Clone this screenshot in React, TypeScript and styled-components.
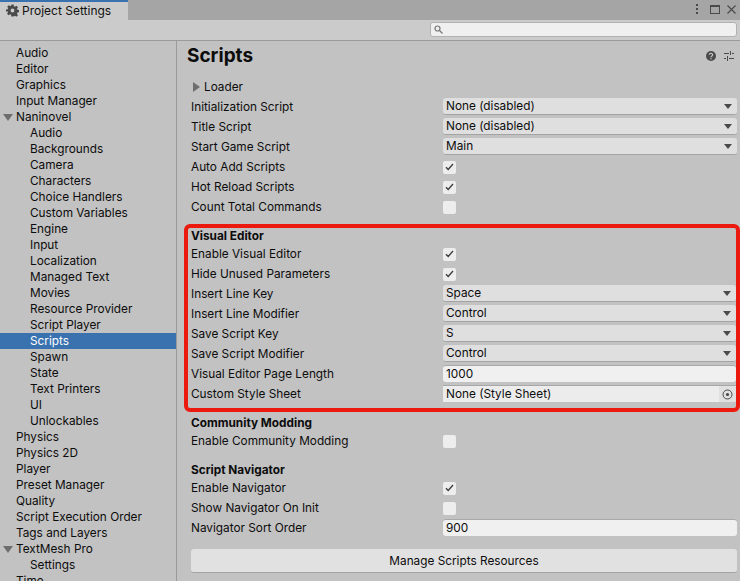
import React from 'react';
import styled, { createGlobalStyle } from 'styled-components';

const GlobalStyle = createGlobalStyle`
    html, body {
        margin: 0;
        height: 581px;
        overflow: hidden;
        background: #c2c2c2;
    }
    body {
        font-family: Inter, "Liberation Sans", sans-serif;
        font-size: 11.8px;
        color: #0c0c0c;
    }
`;

type NavItem = { label: string; depth?: number; open?: boolean; selected?: boolean };

const navItems: NavItem[] = [
    { label: 'Audio' },
    { label: 'Editor' },
    { label: 'Graphics' },
    { label: 'Input Manager' },
    { label: 'Naninovel', open: true },
    { label: 'Audio', depth: 1 },
    { label: 'Backgrounds', depth: 1 },
    { label: 'Camera', depth: 1 },
    { label: 'Characters', depth: 1 },
    { label: 'Choice Handlers', depth: 1 },
    { label: 'Custom Variables', depth: 1 },
    { label: 'Engine', depth: 1 },
    { label: 'Input', depth: 1 },
    { label: 'Localization', depth: 1 },
    { label: 'Managed Text', depth: 1 },
    { label: 'Movies', depth: 1 },
    { label: 'Resource Provider', depth: 1 },
    { label: 'Script Player', depth: 1 },
    { label: 'Scripts', depth: 1, selected: true },
    { label: 'Spawn', depth: 1 },
    { label: 'State', depth: 1 },
    { label: 'Text Printers', depth: 1 },
    { label: 'UI', depth: 1 },
    { label: 'Unlockables', depth: 1 },
    { label: 'Physics' },
    { label: 'Physics 2D' },
    { label: 'Player' },
    { label: 'Preset Manager' },
    { label: 'Quality' },
    { label: 'Script Execution Order' },
    { label: 'Tags and Layers' },
    { label: 'TextMesh Pro', open: true },
    { label: 'Settings', depth: 1 },
    { label: 'Time' },
];

type Field =
    | { kind: 'select'; label: string; value: string }
    | { kind: 'check'; label: string; checked: boolean }
    | { kind: 'input'; label: string; value: string }
    | { kind: 'object'; label: string; value: string };

const scriptFields: Field[] = [
    { kind: 'select', label: 'Initialization Script', value: 'None (disabled)' },
    { kind: 'select', label: 'Title Script', value: 'None (disabled)' },
    { kind: 'select', label: 'Start Game Script', value: 'Main' },
    { kind: 'check', label: 'Auto Add Scripts', checked: true },
    { kind: 'check', label: 'Hot Reload Scripts', checked: true },
    { kind: 'check', label: 'Count Total Commands', checked: false },
];

const editorFields: Field[] = [
    { kind: 'check', label: 'Enable Visual Editor', checked: true },
    { kind: 'check', label: 'Hide Unused Parameters', checked: true },
    { kind: 'select', label: 'Insert Line Key', value: 'Space' },
    { kind: 'select', label: 'Insert Line Modifier', value: 'Control' },
    { kind: 'select', label: 'Save Script Key', value: 'S' },
    { kind: 'select', label: 'Save Script Modifier', value: 'Control' },
    { kind: 'input', label: 'Visual Editor Page Length', value: '1000' },
    { kind: 'object', label: 'Custom Style Sheet', value: 'None (Style Sheet)' },
];

const navigatorFields: Field[] = [
    { kind: 'check', label: 'Enable Navigator', checked: true },
    { kind: 'check', label: 'Show Navigator On Init', checked: false },
    { kind: 'input', label: 'Navigator Sort Order', value: '900' },
];

const GearIcon = () => (
    <svg width="13" height="13" viewBox="0 0 24 24" fill="#4a4a4a">
        <path
            fillRule="evenodd"
            d="M10 1h4l.6 3.200 2 .8 2.700-1.800 2.800 2.800-1.800 2.700.8 2 3.200.6v4l-3.200.6-.8 2 1.800 2.700-2.800 2.800-2.700-1.800-2 .8L14 23h-4l-.6-3.200-2-.8-2.700 1.800-2.800-2.800 1.800-2.700-.8-2L0 14.200v-4l3.200-.6.8-2L2.200 4.900 5 2.100l2.700 1.800 2-.8zM12 8.500a3.500 3.500 0 1 0 0 7 3.500 3.500 0 0 0 0-7z"
        />
    </svg>
);

const SearchIcon = () => (
    <svg width="9" height="9" viewBox="0 0 9 9" fill="none" stroke="#777" strokeWidth="1.2">
        <circle cx="3.500" cy="3.500" r="2.500" />
        <path d="M5.500 5.500 8.500 8.500" />
    </svg>
);

const HelpIcon = () => (
    <svg width="10" height="10" viewBox="0 0 11 11">
        <circle cx="5.500" cy="5.500" r="5.500" fill="#4b4b4b" />
        <path d="M3.700 4.200a1.800 1.600 0 1 1 2.800 1.300c-.6.4-1 .7-1 1.400" fill="none" stroke="#c2c2c2" strokeWidth="1.400" />
        <rect x="4.800" y="7.800" width="1.400" height="1.400" fill="#c2c2c2" />
    </svg>
);

const PresetIcon = () => (
    <svg width="10" height="10" viewBox="0 0 10 10" fill="#4b4b4b">
        <rect x="0" y="2" width="5" height="1" />
        <rect x="6" y="0" width="1" height="4" />
        <rect x="8" y="2" width="2" height="1" />
        <rect x="0" y="7" width="2" height="1" />
        <rect x="3" y="5" width="1" height="5" />
        <rect x="5" y="7" width="5" height="1" />
    </svg>
);

const TargetIcon = () => (
    <svg width="11" height="11" viewBox="0 0 11 11">
        <circle cx="5.500" cy="5.500" r="4.500" fill="none" stroke="#484848" strokeWidth="1" />
        <circle cx="5.500" cy="5.500" r="1.600" fill="#484848" />
    </svg>
);

const CheckMark = () => (
    <svg width="9" height="8" viewBox="0 0 9 8" fill="none" stroke="#3a3a3a" strokeWidth="1.300">
        <path d="M1 4.200 3.200 6.500 8 1" />
    </svg>
);

const FieldControl = ({ field }: { field: Field }) => {
    switch (field.kind) {
        case 'select':
            return (
                <Dropdown>
                    <span>{field.value}</span>
                    <DropdownArrow />
                </Dropdown>
            );
        case 'check':
            return <CheckBox>{field.checked && <CheckMark />}</CheckBox>;
        case 'input':
            return <TextInput>{field.value}</TextInput>;
        case 'object':
            return (
                <ObjectField>
                    <ObjectValue>{field.value}</ObjectValue>
                    <ObjectPicker>
                        <TargetIcon />
                    </ObjectPicker>
                </ObjectField>
            );
    }
};

const FieldRows = ({ fields }: { fields: Field[] }) => (
    <>
        {fields.map((field) => (
            <Row key={field.label}>
                <RowLabel>{field.label}</RowLabel>
                <FieldControl field={field} />
            </Row>
        ))}
    </>
);

export default function App() {
    return (
        <Window>
            <GlobalStyle />
            <TabBar>
                <Tab>
                    <GearIcon />
                    <span>Project Settings</span>
                </Tab>
                <WindowActions>
                    <KebabDots>
                        <i />
                        <i />
                        <i />
                    </KebabDots>
                    <MaximizeBox />
                    <svg width="9" height="9" viewBox="0 0 9 9" stroke="#4a4a4a" strokeWidth="1.100">
                        <path d="M.5.500l8 8M8.500.500l-8 8" />
                    </svg>
                </WindowActions>
            </TabBar>
            <SearchBar>
                <SearchField>
                    <SearchIcon />
                </SearchField>
            </SearchBar>
            <Body>
                <Sidebar>
                    {navItems.map((item, i) => (
                        <NavRow key={i} $depth={item.depth ?? 0} $selected={!!item.selected}>
                            {item.open && <OpenArrow />}
                            {item.label}
                        </NavRow>
                    ))}
                </Sidebar>
                <Content>
                    <TitleRow>
                        <Title>Scripts</Title>
                        <TitleIcons>
                            <HelpIcon />
                            <PresetIcon />
                        </TitleIcons>
                    </TitleRow>
                    <LoaderRow>
                        <ClosedArrow />
                        Loader
                    </LoaderRow>
                    <FieldRows fields={scriptFields} />
                    <Highlight>
                        <SectionHeading>Visual Editor</SectionHeading>
                        <FieldRows fields={editorFields} />
                    </Highlight>
                    <SectionHeading $gap={3}>Community Modding</SectionHeading>
                    <Row>
                        <RowLabel>Enable Community Modding</RowLabel>
                        <CheckBox />
                    </Row>
                    <SectionHeading $gap={11}>Script Navigator</SectionHeading>
                    <FieldRows fields={navigatorFields} />
                    <ManageButton>Manage Scripts Resources</ManageButton>
                </Content>
            </Body>
        </Window>
    );
}

const Window = styled.div`
    width: 740px;
    height: 581px;
    overflow: hidden;
    display: flex;
    flex-direction: column;
`;

const TabBar = styled.div`
    height: 20px;
    flex: none;
    background: #a5a5a5;
    display: flex;
    justify-content: space-between;
`;

const Tab = styled.div`
    width: 128px;
    box-sizing: border-box;
    background: #cbcbcb;
    border-top: 2px solid #3a72b0;
    padding: 0 0 1px 6px;
    display: flex;
    align-items: center;
    gap: 3px;
    font-size: 12px;
    color: #111;
`;

const WindowActions = styled.div`
    display: flex;
    align-items: center;
    gap: 7px;
    padding: 0 4px 2px 0;
`;

const KebabDots = styled.div`
    display: flex;
    flex-direction: column;
    gap: 2px;
    margin-right: 5px;

    i {
        width: 2px;
        height: 2px;
        background: #4a4a4a;
    }
`;

const MaximizeBox = styled.div`
    width: 8px;
    height: 6px;
    border: 1px solid #4a4a4a;
    border-top-width: 2px;
`;

const SearchBar = styled.div`
    height: 20px;
    flex: none;
    box-sizing: border-box;
    background: #cbcbcb;
    display: flex;
    justify-content: flex-end;
    padding: 2px 3px 0 0;
`;

const SearchField = styled.div`
    width: 307px;
    height: 15px;
    box-sizing: border-box;
    background: #f0f0f0;
    border: 1px solid #b2b2b2;
    border-radius: 3px;
    padding: 2px 0 0 3px;
    line-height: 0;
`;

const Body = styled.div`
    flex: 1;
    min-height: 0;
    display: flex;
    border-top: 1px solid #9a9a9a;
`;

const Sidebar = styled.div`
    width: 177px;
    flex: none;
    box-sizing: border-box;
    padding-top: 4px;
    border-right: 1px solid #9a9a9a;
`;

const NavRow = styled.div<{ $depth: number; $selected: boolean }>`
    position: relative;
    height: 16px;
    line-height: 16px;
    padding-left: ${(p) => 16 + p.$depth * 14}px;
    background: ${(p) => (p.$selected ? '#3a72b0' : 'transparent')};
    color: ${(p) => (p.$selected ? '#fff' : '#0c0c0c')};
`;

const OpenArrow = styled.span`
    position: absolute;
    left: 3px;
    top: 5px;
    border-left: 5px solid transparent;
    border-right: 5px solid transparent;
    border-top: 7px solid #6e6e6e;
`;

const ClosedArrow = styled.span`
    border-top: 5px solid transparent;
    border-bottom: 5px solid transparent;
    border-left: 7px solid #6e6e6e;
    margin-right: 4px;
`;

const Content = styled.div`
    flex: 1;
    min-width: 0;
    padding: 0 3px 0 14px;
`;

const TitleRow = styled.div`
    height: 29px;
    margin: 0 0 7px -4px;
    display: flex;
    align-items: center;
    justify-content: space-between;
`;

const Title = styled.div`
    font-size: 19px;
    font-weight: 700;
    color: #0c0c0c;
`;

const TitleIcons = styled.div`
    display: flex;
    gap: 8px;
    align-items: center;
    padding-right: 3px;
`;

const LoaderRow = styled.div`
    height: 20px;
    display: flex;
    align-items: center;
    padding-left: 2px;
`;

const Row = styled.div`
    height: 20px;
    display: grid;
    grid-template-columns: 252px 1fr;
    align-items: center;
`;

const RowLabel = styled.div`
    white-space: nowrap;
`;

const Dropdown = styled.div`
    align-self: start;
    height: 17px;
    margin-top: 1px;
    box-sizing: border-box;
    background: #dfdfdf;
    border-bottom: 1px solid #a3a3a3;
    border-radius: 3px;
    padding: 0 4px 0 3px;
    display: flex;
    align-items: center;
    justify-content: space-between;
`;

const DropdownArrow = styled.span`
    border-left: 4px solid transparent;
    border-right: 4px solid transparent;
    border-top: 5px solid #4a4a4a;
    margin-right: 1px;
`;

const CheckBox = styled.div`
    width: 13px;
    height: 13px;
    background: #ededed;
    border-radius: 2px;
    display: flex;
    align-items: center;
    justify-content: center;
`;

const TextInput = styled.div`
    align-self: start;
    height: 17px;
    margin-top: 1px;
    box-sizing: border-box;
    background: #f0f0f0;
    border-top: 1px solid #a8a8a8;
    border-radius: 3px;
    padding-left: 3px;
    line-height: 16px;
`;

const ObjectField = styled.div`
    align-self: start;
    height: 17px;
    margin-top: 1px;
    box-sizing: border-box;
    background: #ececec;
    border-top: 1px solid #a8a8a8;
    display: flex;
`;

const ObjectValue = styled.div`
    flex: 1;
    padding-left: 3px;
    line-height: 16px;
`;

const ObjectPicker = styled.div`
    width: 17px;
    background: #e0e0e0;
    display: flex;
    align-items: center;
    justify-content: center;
`;

const Highlight = styled.div`
    border: 4px solid #ec1a0e;
    border-radius: 6px;
    margin: 7px -3px 0 -7px;
    padding: 0 0 4px 3px;
`;

const SectionHeading = styled.div<{ $gap?: number }>`
    height: 16px;
    line-height: 16px;
    font-weight: 700;
    margin-top: ${(p) => p.$gap ?? 0}px;
`;

const ManageButton = styled.div`
    height: 24px;
    margin-top: 11px;
    box-sizing: border-box;
    background: #e1e1e1;
    border-bottom: 1px solid #a3a3a3;
    border-radius: 3px;
    display: flex;
    align-items: center;
    justify-content: center;
`;
